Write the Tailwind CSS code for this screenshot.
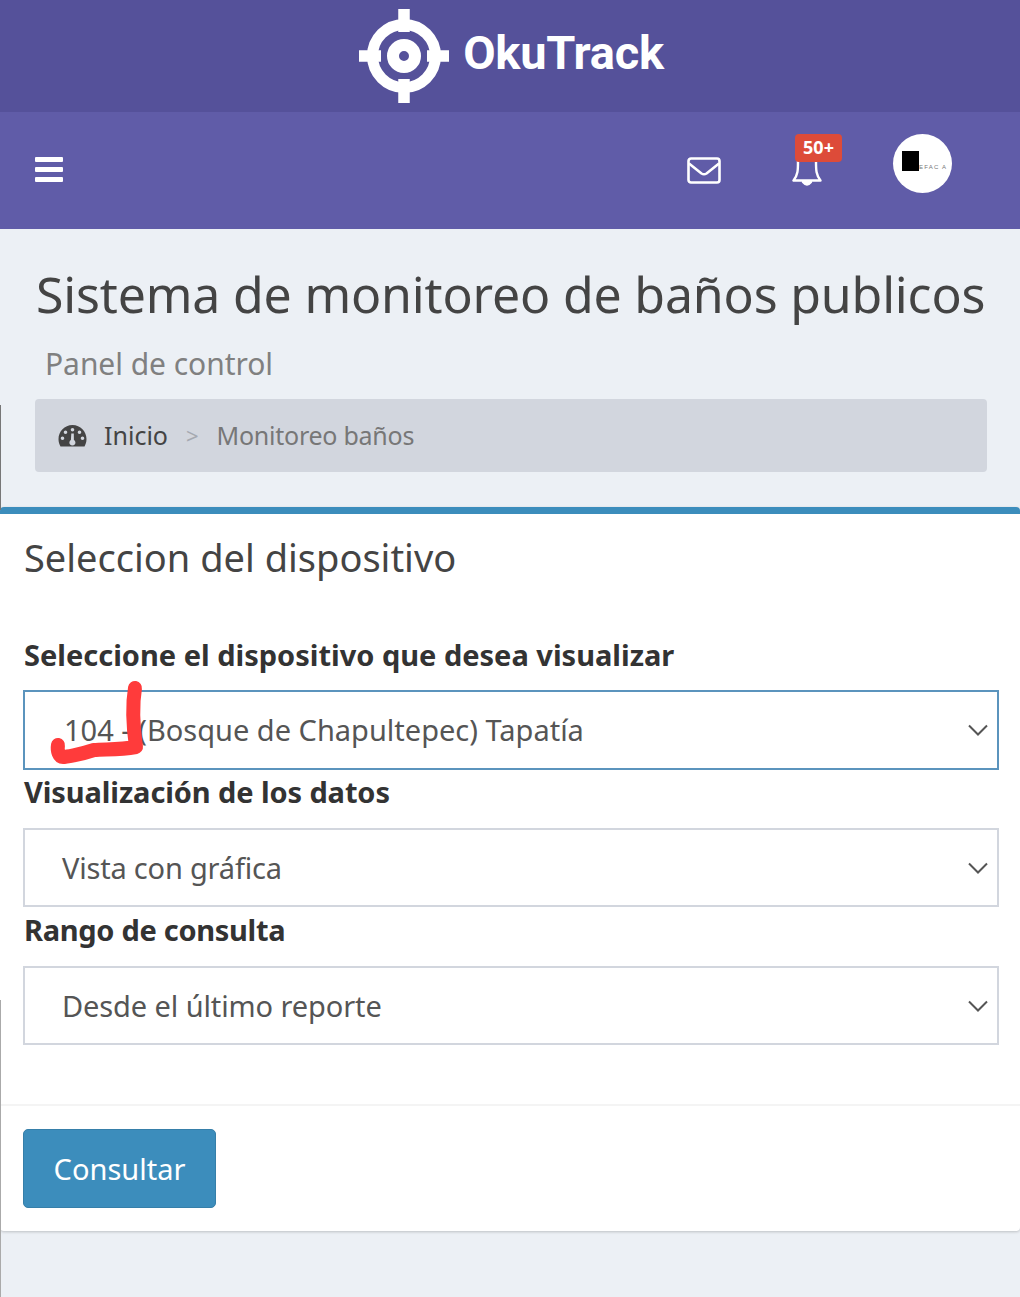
<!DOCTYPE html>
<html lang="es">
<head>
<meta charset="utf-8">
<script src="https://cdn.jsdelivr.net/npm/@tailwindcss/browser@4"></script>
<title>OkuTrack</title>
</head>
<body class="bg-[#ecf0f5] font-['Noto_Sans',sans-serif] text-[#444]">
<div class="w-[1020px] h-[1297px] overflow-hidden relative bg-[#ecf0f5]">
  <header class="h-[112px] bg-[#55519a] flex items-center justify-center gap-[14px] pl-[3px]">
    <svg class="w-[90px] h-[94px]" viewBox="0 0 90 94" fill="none" stroke="#fff">
      <circle cx="45" cy="47" r="31.500" stroke-width="11"/>
      <circle cx="45" cy="47" r="11" stroke-width="12"/>
      <path d="M45 0V23M45 70V94M0 47H22M68 47H90" stroke-width="11.500"/>
    </svg>
    <span class="font-['Roboto',sans-serif] font-bold text-[47px] leading-none text-white tracking-[-0.25px] mb-[8px]">OkuTrack</span>
  </header>
  <nav class="h-[117px] bg-[#605ca8] flex items-center pl-[35px] relative">
    <div class="flex flex-col gap-[5px] w-[28px] mt-[-2px]">
      <span class="h-[5px] bg-white rounded-[1px]"></span>
      <span class="h-[5px] bg-white rounded-[1px]"></span>
      <span class="h-[5px] bg-white rounded-[1px]"></span>
    </div>
    <div class="ml-auto flex items-center pr-[68px]">
      <svg class="w-[34px] h-[27px]" viewBox="0 0 34 27" fill="none" stroke="#fff" stroke-width="2.600" stroke-linejoin="round">
        <rect x="1.500" y="1.500" width="31" height="24" rx="2.500"/>
        <path d="M2 6.500 14.500 16.500Q17 18 19.500 16.500L32 6.500"/>
      </svg>
      <div class="relative w-[34px] h-[40px] ml-[71px] mr-[67px]">
        <svg class="absolute left-0 top-[4px] w-[30px] h-[32px]" viewBox="0 0 30 32" fill="none" stroke="#fff" stroke-width="2.400" stroke-linejoin="round">
          <path d="M6 6C6 15 6 20 1.500 25.500H28.500C24 20 24 15 24 6"/>
          <path d="M11 27Q15 32 19 27Z" fill="#fff"/>
        </svg>
        <span class="absolute left-[3px] top-[-17px] w-[47px] h-[28px] rounded-[4px] bg-[#dd4b39] text-white font-bold text-[18px] leading-[27px] text-center">50+</span>
      </div>
      <div class="relative w-[59px] h-[59px] mt-[-14px] rounded-full bg-white overflow-hidden">
        <span class="absolute left-[9px] top-[17px] w-[17px] h-[20px] bg-black"></span>
        <span class="absolute left-[26px] top-[29px] text-[6px] leading-[8px] tracking-[1.200px] text-[#777] font-['Liberation_Sans',sans-serif] whitespace-nowrap">EFAC A</span>
      </div>
    </div>
  </nav>
  <main>
    <h1 class="pl-[36px] pt-[33px] text-[50px] leading-[64px] tracking-[-0.170px] text-[#444] whitespace-nowrap">Sistema de monitoreo de baños publicos</h1>
    <p class="pl-[45px] mt-[17px] text-[30px] leading-[42px] tracking-[-0.050px] text-[#808080] whitespace-nowrap">Panel de control</p>
    <div class="mx-[35px] mt-[14px] w-[952px] h-[73px] rounded-[4px] bg-[#d2d6de] flex items-center pl-[23px] text-[25px] whitespace-nowrap">
      <svg class="w-[29px] h-[23px] mr-[17px]" viewBox="0 0 29 23" fill="#444">
        <path fill-rule="evenodd" d="M14.500 1C6.500 1 .5 7.500.5 15c0 3 .8 5.400 2 7.500H26.500c1.200-2.100 2-4.500 2-7.500C28.500 7.500 22.500 1 14.500 1ZM14.500 4a1.800 1.800 0 1 1 0 3.600 1.800 1.800 0 0 1 0-3.600ZM7.500 6.500a1.800 1.800 0 1 1 0 3.600 1.800 1.800 0 0 1 0-3.600ZM21.500 6.500a1.800 1.800 0 1 1 0 3.600 1.800 1.800 0 0 1 0-3.600ZM4.500 12.500a1.800 1.800 0 1 1 0 3.600 1.800 1.800 0 0 1 0-3.600ZM24.500 12.500a1.800 1.800 0 1 1 0 3.600 1.800 1.800 0 0 1 0-3.600ZM15.800 9.500 15.900 16a3 3 0 1 1-3 0L13.300 9.500Z"/>
      </svg>
      <span class="text-[#444]">Inicio</span>
      <span class="ml-[18px] mr-[18px] text-[#a5a9b1] text-[22px]">&gt;</span>
      <span class="text-[#777] tracking-[-0.250px]">Monitoreo baños</span>
    </div>
    <section class="mt-[35px] h-[724px] bg-white rounded-[4px] border-t-[7px] border-[#3c8dbc] shadow-[0_1px_3px_rgba(0,0,0,0.2)] flex flex-col">
      <div class="px-[24px] pt-[16px] h-[126px]">
        <h2 class="text-[38px] leading-[54px] text-[#444] whitespace-nowrap">Seleccion del dispositivo</h2>
      </div>
      <form class="pl-[23px] pr-[21px] flex flex-col flex-1">
        <label class="block pl-[1px] text-[29px] leading-[30px] font-bold text-[#333] h-[50px] whitespace-nowrap">Seleccione el dispositivo que desea visualizar</label>
        <div class="relative h-[80px] border-2 border-[#5b94bd] flex items-center pl-[39px] pr-[9px] text-[29px] text-[#555] whitespace-nowrap">
          <span>104 - (Bosque de Chapultepec) Tapatía</span>
          <svg class="ml-auto w-[20px] h-[12px]" viewBox="0 0 20 12" fill="none" stroke="#555" stroke-width="2"><path d="M1 1.500 10 10.500 19 1.500"/></svg>
          <svg class="absolute left-[24px] top-[-11px] w-[96px] h-[92px] overflow-visible" viewBox="0 0 96 92" fill="none" stroke="#ff3b3b" stroke-width="14" stroke-linecap="round" stroke-linejoin="round"><path d="M86 7C83 25 84 45 87 66C70 69 55 68 45 69C30 74 16 76 14 76C10 76 8 70 9 64"/></svg>
        </div>
        <label class="block pl-[1px] mt-[7px] text-[29px] leading-[30px] tracking-[-0.100px] font-bold text-[#333] h-[51px] whitespace-nowrap">Visualización de los datos</label>
        <div class="h-[79px] border-2 border-[#d2d6de] flex items-center pl-[37px] pr-[9px] text-[29px] tracking-[-0.200px] text-[#555] whitespace-nowrap">
          <span>Vista con gráfica</span>
          <svg class="ml-auto w-[20px] h-[12px]" viewBox="0 0 20 12" fill="none" stroke="#555" stroke-width="2"><path d="M1 1.500 10 10.500 19 1.500"/></svg>
        </div>
        <label class="block pl-[1px] mt-[8px] text-[29px] leading-[30px] tracking-[-0.300px] font-bold text-[#333] h-[51px] whitespace-nowrap">Rango de consulta</label>
        <div class="h-[79px] border-2 border-[#d2d6de] flex items-center pl-[37px] pr-[9px] text-[29px] tracking-[-0.100px] text-[#555] whitespace-nowrap">
          <span>Desde el último reporte</span>
          <svg class="ml-auto w-[20px] h-[12px]" viewBox="0 0 20 12" fill="none" stroke="#555" stroke-width="2"><path d="M1 1.500 10 10.500 19 1.500"/></svg>
        </div>
      </form>
      <div class="h-[127px] border-t-2 border-[#f4f4f4] pl-[23px] pt-[23px]">
        <button class="w-[193px] h-[79px] rounded-[5px] bg-[#3c8dbc] border border-[#367fa9] text-white text-[29px]">Consultar</button>
      </div>
    </section>
  </main>
  <div class="absolute left-0 top-[405px] w-[1px] h-[105px] bg-[#777]"></div>
  <div class="absolute left-0 top-[1000px] w-[1px] h-[297px] bg-[#aaa]"></div>
</div>
</body>
</html>
